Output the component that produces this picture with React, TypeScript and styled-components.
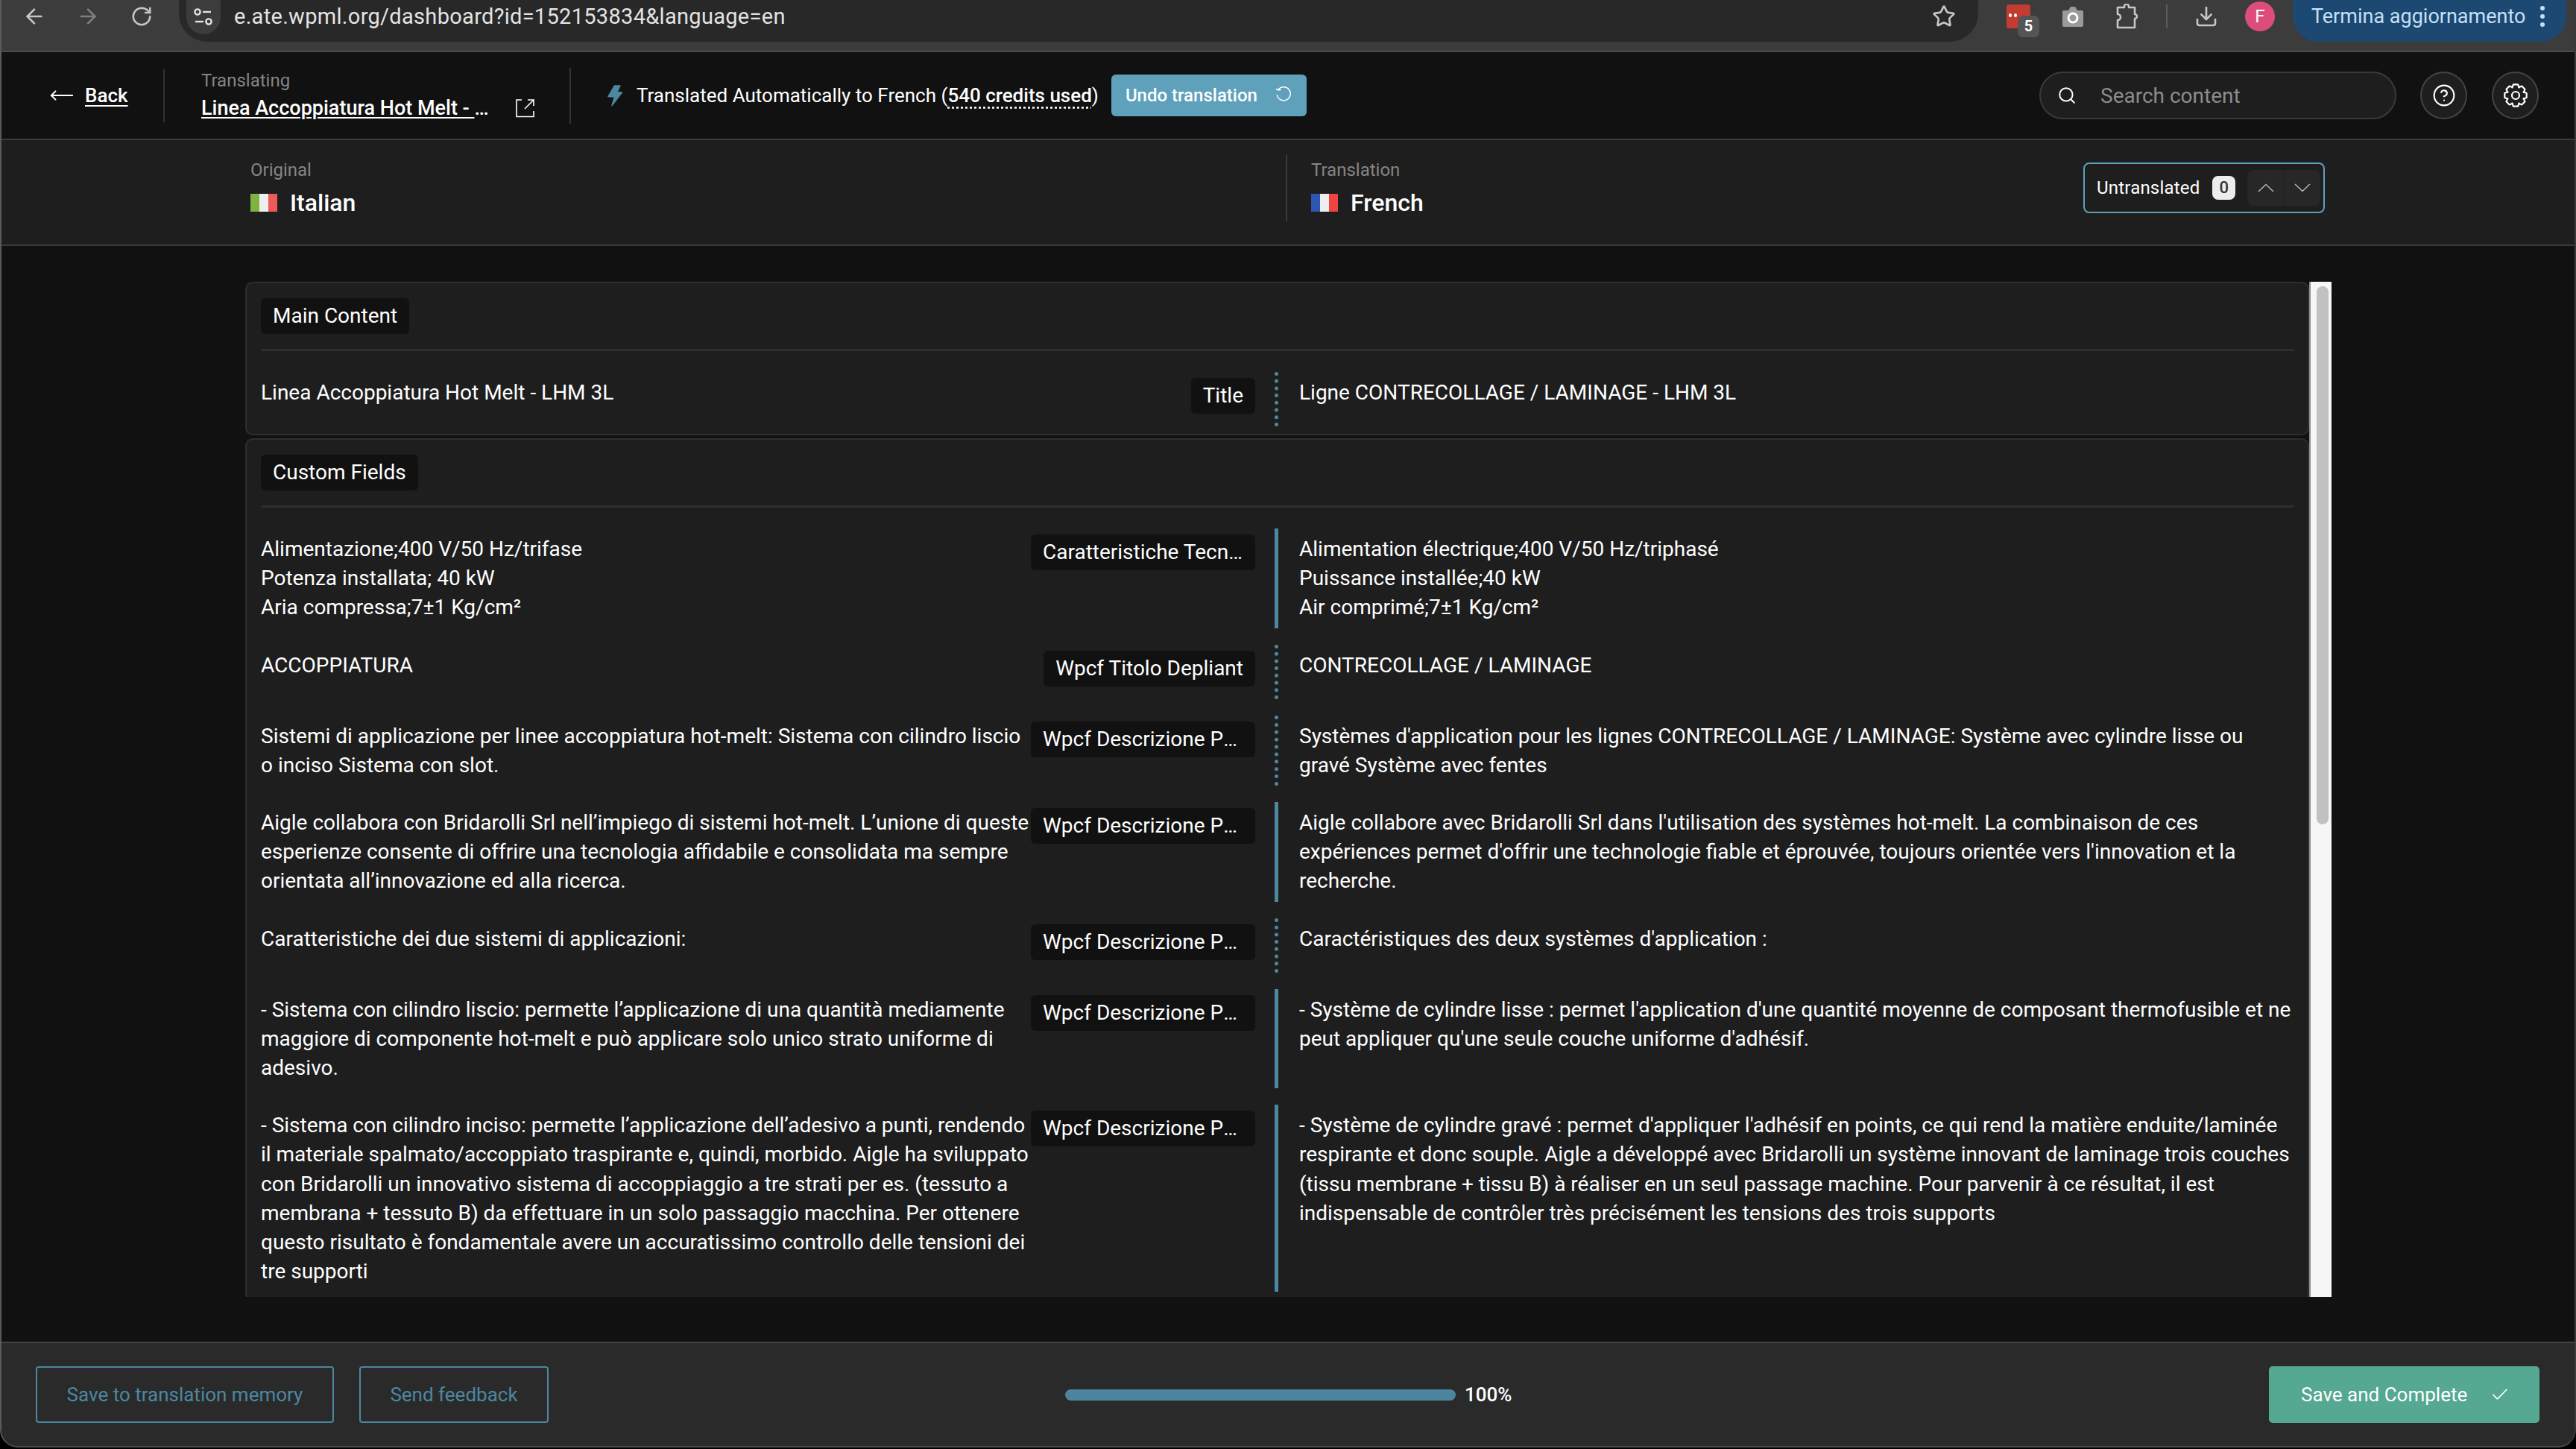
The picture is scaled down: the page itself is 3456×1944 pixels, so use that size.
import styled, { createGlobalStyle } from 'styled-components';
import {
	ArrowLeft,
	ArrowRight,
	Check,
	CircleHelp,
	Download,
	MoveLeft,
	RotateCw,
	Search,
	Star
} from 'lucide-react';

const GlobalStyle = createGlobalStyle`
	html, body {
		margin: 0;
		padding: 0;
		background: #000;
	}
	* {
		box-sizing: border-box;
	}
	body {
		font-family: Roboto, "Liberation Sans", sans-serif;
		font-size: 28px;
		color: #fff;
	}
`;

const Frame = styled.div`
	width: 3456px;
	height: 1942px;
	display: flex;
	flex-direction: column;
	overflow: hidden;
	border-left: 2px solid #5a5a5a;
	border-right: 2px solid #3a3a3a;
	border-bottom: 2px solid #4a4a4a;
	border-radius: 0 0 24px 24px;
	background: #111;
`;

/* browser chrome */
const Chrome = styled.div`
	height: 70px;
	flex: none;
	display: flex;
	align-items: flex-start;
	background: #3c3c3c;
	border-bottom: 2px solid #4a4a4a;
`;

const NavIcon = styled.span`
	width: 32px;
	height: 44px;
	display: flex;
	align-items: center;
	justify-content: center;
	color: #c6c6c6;
`;

const NavIcons = styled.div`
	display: flex;
	gap: 40px;
	padding-left: 28px;
	width: 238px;
	flex: none;
`;

const UrlPill = styled.div`
	width: 2414px;
	height: 56px;
	flex: none;
	display: flex;
	align-items: flex-start;
	padding-left: 10px;
	background: #282828;
	border-radius: 0 0 38px 38px;
`;

const TuneBadge = styled.span`
	width: 46px;
	height: 46px;
	display: flex;
	align-items: center;
	justify-content: center;
	flex: none;
	background: #3c3c3c;
	border-radius: 0 0 23px 23px;
`;

const UrlText = styled.span`
	margin-left: 18px;
	line-height: 44px;
	font-size: 29px;
	letter-spacing: 0.3px;
	color: #e3e3e3;
`;

const StarSlot = styled.span`
	margin-left: auto;
	margin-right: 30px;
	height: 44px;
	display: flex;
	align-items: center;
	color: #c6c6c6;
`;

const Extensions = styled.div`
	display: flex;
	align-items: flex-start;
	height: 56px;
	flex: 1;
`;

const RedExt = styled.span`
	position: relative;
	width: 32px;
	height: 32px;
	margin: 6px 0 0 38px;
	flex: none;
	background: #c43c31;
	border-radius: 3px;
	display: flex;
	gap: 3px;
	padding: 12px 0 0 3px;
`;

const RedDot = styled.i`
	width: 4px;
	height: 5px;
	border-radius: 50%;
	background: #fff;
`;

const CountBadge = styled.span`
	position: absolute;
	left: 15px;
	top: 15px;
	width: 29px;
	height: 29px;
	border-radius: 7px;
	background: #555;
	color: #fff;
	font-size: 20px;
	font-weight: 700;
	line-height: 29px;
	text-align: center;
`;

const ExtIcon = styled.span<{ $gap: number }>`
	width: 32px;
	height: 44px;
	flex: none;
	display: flex;
	align-items: center;
	justify-content: center;
	margin-left: ${(p) => p.$gap}px;
`;

const ChromeSeparator = styled.span`
	width: 2px;
	height: 32px;
	margin: 6px 0 0 36px;
	flex: none;
	background: #5c5c5c;
`;

const Avatar = styled.span`
	width: 40px;
	height: 40px;
	margin: 2px 0 0 36px;
	flex: none;
	border-radius: 50%;
	background: #dc4d7c;
	color: #fff;
	font-size: 24px;
	line-height: 40px;
	text-align: center;
`;

const UpdatePill = styled.div`
	width: 367px;
	height: 56px;
	margin-left: 24px;
	flex: none;
	display: flex;
	align-items: flex-start;
	padding-left: 25px;
	background: #1c4871;
	border-radius: 0 0 34px 34px;
	color: #c2e0f8;
	font-size: 27px;
	line-height: 44px;
`;

const KebabDots = styled.span`
	margin: 8px 0 0 20px;
	display: flex;
	flex-direction: column;
	gap: 5px;

	i {
		width: 6px;
		height: 6px;
		border-radius: 50%;
		background: #c2e0f8;
	}
`;

/* app header */
const Header = styled.header`
	height: 118px;
	flex: none;
	display: flex;
	align-items: center;
	padding-left: 64px;
	background: #111;
	border-bottom: 2px solid #3c3c3c;
`;

const BackLink = styled.a`
	display: flex;
	align-items: center;
	gap: 14px;
	width: 153px;
	flex: none;
	font-size: 26px;
	font-weight: 500;
	color: #fff;
	text-decoration: underline;
	text-underline-offset: 4px;
`;

const HeaderDivider = styled.span<{ $height: number }>`
	width: 2px;
	height: ${(p) => p.$height}px;
	flex: none;
	background: #333;
`;

const TranslatingBlock = styled.div`
	display: flex;
	flex-direction: column;
	gap: 4px;
	margin-left: 49px;
	width: 494px;
	flex: none;
`;

const MutedLabel = styled.span`
	font-size: 24px;
	line-height: 30px;
	color: #858585;
`;

const TitleLine = styled.div`
	display: flex;
	align-items: center;
	gap: 25px;
`;

const TitleLink = styled.a`
	width: 397px;
	overflow: hidden;
	white-space: nowrap;
	text-overflow: ellipsis;
	font-size: 27px;
	line-height: 36px;
	font-weight: 500;
	color: #fff;
	text-decoration: underline;
	text-underline-offset: 3px;
`;

const AutoStatus = styled.div`
	display: flex;
	align-items: center;
	margin-left: 49px;
	white-space: nowrap;
	font-size: 26px;
`;

const StatusText = styled.span`
	margin-left: 18px;
`;

const Credits = styled.span`
	font-weight: 500;
	text-decoration: underline dotted;
	text-underline-offset: 6px;
`;

const UndoButton = styled.button`
	height: 56px;
	width: 262px;
	margin-left: 17px;
	padding: 0 0 7px 19px;
	display: flex;
	align-items: center;
	gap: 24px;
	border: 0;
	border-radius: 6px;
	background: #5fa0bb;
	color: #fff;
	font-family: inherit;
	font-size: 24px;
	font-weight: 500;
`;

const UndoLabel = styled.span`
	margin-bottom: -7px;
`;

const SearchBox = styled.div`
	width: 479px;
	height: 64px;
	margin-left: auto;
	flex: none;
	display: flex;
	align-items: center;
	gap: 32px;
	padding-left: 22px;
	border: 2px solid #3a3a3a;
	border-radius: 32px;
	background: #1e1e1e;
	color: #8c8c8c;
	font-size: 28px;
`;

const RoundButton = styled.span<{ $gap: number }>`
	width: 63px;
	height: 64px;
	margin-left: ${(p) => p.$gap}px;
	flex: none;
	display: flex;
	align-items: center;
	justify-content: center;
	border: 2px solid #444;
	border-radius: 50%;
	background: #1e1e1e;
	color: #fff;
`;

const HeaderEnd = styled.span`
	width: 48px;
	flex: none;
`;

/* language row */
const LanguageBar = styled.div`
	height: 142px;
	flex: none;
	display: flex;
	align-items: center;
	padding-bottom: 12px;
	background: #1e1e1e;
	border-bottom: 2px solid #3a3a3a;
`;

const LanguageCell = styled.div<{ $width: number; $pad: number; $rule?: boolean }>`
	width: ${(p) => p.$width}px;
	height: 90px;
	flex: none;
	display: flex;
	flex-direction: column;
	justify-content: center;
	gap: 9px;
	padding-left: ${(p) => p.$pad}px;
	border-left: ${(p) => (p.$rule ? '2px solid #3a3a3a' : '0')};
`;

const LanguageName = styled.div`
	display: flex;
	align-items: center;
	gap: 17px;
	font-size: 32px;
	line-height: 40px;
	font-weight: 500;
`;

const Flag = styled.span<{ $a: string; $b: string; $c: string }>`
	width: 36px;
	height: 24px;
	flex: none;
	background: linear-gradient(
		90deg,
		${(p) => p.$a} 33.3%,
		${(p) => p.$b} 33.3% 66.6%,
		${(p) => p.$c} 66.6%
	);
`;

const FilterBox = styled.div`
	width: 324px;
	height: 68px;
	margin-left: auto;
	margin-right: 335px;
	flex: none;
	display: flex;
	align-items: center;
	padding-left: 16px;
	border: 2px solid #5fa0bb;
	border-radius: 8px;
	font-size: 24px;
	letter-spacing: 0.2px;
`;

const ZeroBadge = styled.span`
	width: 31px;
	height: 32px;
	margin-left: 17px;
	flex: none;
	border-radius: 8px;
	background: #ececec;
	color: #333;
	font-size: 22px;
	font-weight: 500;
	line-height: 32px;
	text-align: center;
`;

const FilterArrows = styled.div`
	width: 98px;
	height: 48px;
	margin-left: 16px;
	flex: none;
	display: grid;
	grid-template-columns: 1fr 1fr;
	border-radius: 8px;
	background: #272727;

	span {
		display: flex;
		align-items: center;
		justify-content: center;
	}
	span + span {
		border-left: 1px solid #1e1e1e;
	}
`;

/* content */
const Main = styled.main`
	flex: 1;
	min-height: 0;
	display: flex;
	padding: 48px 0 60px 327px;
	background: #111;
`;

const ScrollArea = styled.div`
	width: 2769px;
	flex: none;
	overflow: hidden;
	display: flex;
	flex-direction: column;
	gap: 4px;
`;

const Scrollbar = styled.div`
	width: 30px;
	flex: none;
	padding: 6px 6px 0 8px;
	background: #f6f6f6;
	border-left: 2px solid #8f8f8f;
`;

const ScrollThumb = styled.div`
	width: 16px;
	height: 722px;
	border-radius: 8px;
	background: #c1c1c1;
`;

const Section = styled.section`
	flex: none;
	padding: 20px 18px 10px 19px;
	background: #1e1e1e;
	border: 2px solid #2e2e2e;
	border-radius: 10px;
`;

const SectionHead = styled.div`
	padding-bottom: 20px;
	border-bottom: 3px solid #2e2e2e;
	margin-bottom: 28px;
`;

const Chip = styled.span`
	display: inline-block;
	height: 48px;
	max-width: 301px;
	padding: 0 16px;
	overflow: hidden;
	white-space: nowrap;
	text-overflow: ellipsis;
	line-height: 48px;
	font-size: 28px;
	background: #111;
	border-radius: 6px;
	vertical-align: top;
`;

const Rows = styled.div`
	display: flex;
	flex-direction: column;
	gap: 22px;
`;

const Row = styled.div`
	display: grid;
	grid-template-columns: 1033px 301px 34px 1fr;
	line-height: 39.2px;
	font-size: 28px;
`;

const Cell = styled.div`
	padding: 8px 0;
	white-space: pre-line;
`;

const LabelCell = styled.div`
	padding: 8px 0 17px;
	display: flex;
	justify-content: flex-end;
	align-items: flex-start;
`;

const StatusBar = styled.div<{ $done: boolean }>`
	margin-left: 26px;
	width: 5px;
	border-left: 5px ${(p) => (p.$done ? 'solid' : 'dotted')} #4d87a0;
`;

const TargetCell = styled(Cell)`
	padding-left: 25px;
`;

/* footer */
const Footer = styled.footer`
	height: 140px;
	flex: none;
	display: flex;
	align-items: center;
	padding: 0 47px 0 46px;
	background: #2a2a2a;
	border-top: 2px solid #444;
	font-size: 26px;
`;

const OutlineButton = styled.button<{ $width: number; $gap: number }>`
	width: ${(p) => p.$width}px;
	height: 76px;
	margin-left: ${(p) => p.$gap}px;
	flex: none;
	border: 2px solid #4d87a0;
	border-radius: 4px;
	background: transparent;
	color: #4d87a0;
	font-family: inherit;
	font-size: 26px;
`;

const ProgressWrap = styled.div`
	margin-left: 693px;
	display: flex;
	align-items: center;
	gap: 12px;
	flex: none;
`;

const ProgressBar = styled.div`
	width: 524px;
	height: 15px;
	border-radius: 8px;
	background: #4d859e;
`;

const ProgressValue = styled.span`
	font-weight: 500;
`;

const SaveButton = styled.button`
	width: 363px;
	height: 76px;
	margin-left: auto;
	flex: none;
	display: flex;
	align-items: center;
	gap: 30px;
	padding-left: 43px;
	border: 0;
	border-radius: 5px;
	background: #55a892;
	color: #fff;
	font-family: inherit;
	font-size: 26px;
`;

type RowData = {
	source: string;
	label: string;
	target: string;
	done?: boolean;
};

const customFields: RowData[] = [
	{
		source: 'Alimentazione;400 V/50 Hz/trifase\nPotenza installata; 40 kW\nAria compressa;7±1 Kg/cm²',
		label: 'Caratteristiche Tecniche',
		target: 'Alimentation électrique;400 V/50 Hz/triphasé\nPuissance installée;40 kW\nAir comprimé;7±1 Kg/cm²',
		done: true
	},
	{ source: 'ACCOPPIATURA', label: 'Wpcf Titolo Depliant', target: 'CONTRECOLLAGE / LAMINAGE' },
	{
		source: 'Sistemi di applicazione per linee accoppiatura hot-melt: Sistema con cilindro liscio o inciso Sistema con slot.',
		label: 'Wpcf Descrizione Prodotto',
		target: "Systèmes d'application pour les lignes CONTRECOLLAGE / LAMINAGE: Système avec cylindre lisse ou gravé Système avec fentes"
	},
	{
		source: 'Aigle collabora con Bridarolli Srl nell’impiego di sistemi hot-melt. L’unione di queste esperienze consente di offrire una tecnologia affidabile e consolidata ma sempre orientata all’innovazione ed alla ricerca.',
		label: 'Wpcf Descrizione Prodotto',
		target: "Aigle collabore avec Bridarolli Srl dans l'utilisation des systèmes hot-melt. La combinaison de ces expériences permet d'offrir une technologie fiable et éprouvée, toujours orientée vers l'innovation et la recherche.",
		done: true
	},
	{
		source: 'Caratteristiche dei due sistemi di applicazioni:',
		label: 'Wpcf Descrizione Prodotto',
		target: "Caractéristiques des deux systèmes d'application :"
	},
	{
		source: '- Sistema con cilindro liscio: permette l’applicazione di una quantità mediamente maggiore di componente hot-melt e può applicare solo unico strato uniforme di adesivo.',
		label: 'Wpcf Descrizione Prodotto',
		target: "- Système de cylindre lisse : permet l'application d'une quantité moyenne de composant thermofusible et ne peut appliquer qu'une seule couche uniforme d'adhésif.",
		done: true
	},
	{
		source: '- Sistema con cilindro inciso: permette l’applicazione dell’adesivo a punti, rendendo il materiale spalmato/accoppiato traspirante e, quindi, morbido. Aigle ha sviluppato con Bridarolli un innovativo sistema di accoppiaggio a tre strati per es. (tessuto a membrana + tessuto B) da effettuare in un solo passaggio macchina. Per ottenere questo risultato è fondamentale avere un accuratissimo controllo delle tensioni dei tre supporti',
		label: 'Wpcf Descrizione Prodotto',
		target: "- Système de cylindre gravé : permet d'appliquer l'adhésif en points, ce qui rend la matière enduite/laminée respirante et donc souple. Aigle a développé avec Bridarolli un système innovant de laminage trois couches (tissu membrane + tissu B) à réaliser en un seul passage machine. Pour parvenir à ce résultat, il est indispensable de contrôler très précisément les tensions des trois supports",
		done: true
	}
];

const ContentRow = ({ source, label, target, done }: RowData) => (
	<Row>
		<Cell>{source}</Cell>
		<LabelCell>
			<Chip>{label}</Chip>
		</LabelCell>
		<StatusBar $done={!!done} />
		<TargetCell>{target}</TargetCell>
	</Row>
);

const TuneIcon = () => (
	<svg width="26" height="24" viewBox="0 0 26 24" fill="none" stroke="#e3e3e3" strokeWidth="2.4">
		<circle cx="5" cy="5" r="3.6" />
		<path d="M12 5h11" />
		<path d="M2 18h11" />
		<circle cx="20" cy="18" r="3.6" />
	</svg>
);

const CameraIcon = () => (
	<svg width="30" height="28" viewBox="0 0 30 28">
		<path d="M1 8q0-2 2-2h6l3-5h6l3 5h6q2 0 2 2v18q0 2-2 2H3q-2 0-2-2z" fill="#9a9a9a" />
		<circle cx="15" cy="16" r="6" fill="none" stroke="#fff" strokeWidth="3" />
	</svg>
);

const PuzzleIcon = () => (
	<svg width="32" height="34" viewBox="0 0 32 34" fill="none" stroke="#c6c6c6" strokeWidth="2.6">
		<path d="M12 5V3.5a3 3 0 0 1 6 0V5h8v9a3 3 0 0 1 0 6v12H3V22a4 4 0 0 0 0-8V5z" strokeLinejoin="round" />
	</svg>
);

const BoltIcon = () => (
	<svg width="21" height="29" viewBox="0 0 21 29" style={{ overflow: 'visible' }}>
		<path
			d="M9.5 1h7.5l-4 8.5 6.5.5L6 27.5l3.5-11.5-8.500-.5z"
			fill="#4d87a0"
			stroke="#4d87a0"
			strokeWidth="1.5"
			strokeLinejoin="round"
		/>
	</svg>
);

const LinkOutIcon = () => (
	<svg width="25" height="25" viewBox="0 0 25 25" fill="none" stroke="#fff" strokeWidth="1.6">
		<path d="M8 1H1v22.500h23V16" />
		<path d="M24 1 12 13" />
		<path d="M16 1h8v8" />
	</svg>
);

const UndoIcon = () => (
	<svg width="22" height="22" viewBox="0 0 22 22" fill="none" stroke="#fff" strokeWidth="1.5">
		<path d="M4 6.500A9 9 0 1 1 2.300 13" />
		<path d="M1.500 5.500 4 7l3-.500" strokeLinecap="round" />
	</svg>
);

const WideChevron = ({ up }: { up?: boolean }) => (
	<svg width="22" height="12" viewBox="0 0 22 12" fill="none" stroke="#b4b4b4" strokeWidth="1.5">
		<path d={up ? 'M1 11 11 1.500 21 11' : 'M1 1l10 9.500L21 1'} />
	</svg>
);

// eight tooth cog outline
const gearPoints = Array.from({ length: 8 }, (_, i) => {
	const mid = (i * Math.PI) / 4;
	return [
		[11.6, mid - 0.42],
		[15, mid - 0.2],
		[15, mid + 0.2],
		[11.6, mid + 0.42]
	]
		.map(([r, a]) => `${(16 + r * Math.cos(a)).toFixed(2)},${(16 + r * Math.sin(a)).toFixed(2)}`)
		.join(' ');
}).join(' ');

const GearIcon = () => (
	<svg width="32" height="32" viewBox="0 0 32 32" fill="none" stroke="#fff" strokeWidth="2.2" strokeLinejoin="round">
		<polygon points={gearPoints} />
		<circle cx="16" cy="16" r="5" />
	</svg>
);

const App = () => (
	<>
		<GlobalStyle />
		<Frame>
			<Chrome>
				<NavIcons>
					<NavIcon>
						<ArrowLeft size={32} strokeWidth={2} />
					</NavIcon>
					<NavIcon>
						<ArrowRight size={32} strokeWidth={2} color="#7f7f7f" />
					</NavIcon>
					<NavIcon>
						<RotateCw size={30} strokeWidth={2} />
					</NavIcon>
				</NavIcons>
				<UrlPill>
					<TuneBadge>
						<TuneIcon />
					</TuneBadge>
					<UrlText>e.ate.wpml.org/dashboard?id=152153834&amp;language=en</UrlText>
					<StarSlot>
						<Star size={32} strokeWidth={2} />
					</StarSlot>
				</UrlPill>
				<Extensions>
					<RedExt>
						<RedDot />
						<RedDot />
						<CountBadge>5</CountBadge>
					</RedExt>
					<ExtIcon $gap={41}>
						<CameraIcon />
					</ExtIcon>
					<ExtIcon $gap={41}>
						<PuzzleIcon />
					</ExtIcon>
					<ChromeSeparator />
					<ExtIcon $gap={36}>
						<Download size={34} strokeWidth={2} color="#c6c6c6" />
					</ExtIcon>
					<Avatar>F</Avatar>
					<UpdatePill>
						Termina aggiornamento
						<KebabDots>
							<i />
							<i />
							<i />
						</KebabDots>
					</UpdatePill>
				</Extensions>
			</Chrome>

			<Header>
				<BackLink>
					<MoveLeft size={34} strokeWidth={1.4} />
					Back
				</BackLink>
				<HeaderDivider $height={71} />
				<TranslatingBlock>
					<MutedLabel>Translating</MutedLabel>
					<TitleLine>
						<TitleLink>Linea Accoppiatura Hot Melt - LHM 3L</TitleLink>
						<LinkOutIcon />
					</TitleLine>
				</TranslatingBlock>
				<HeaderDivider $height={75} />
				<AutoStatus>
					<BoltIcon />
					<StatusText>
						Translated Automatically to French (<Credits>540 credits used</Credits>)
					</StatusText>
					<UndoButton>
						<UndoLabel>Undo translation</UndoLabel>
						<UndoIcon />
					</UndoButton>
				</AutoStatus>
				<SearchBox>
					<Search size={26} strokeWidth={1.8} color="#fff" />
					Search content
				</SearchBox>
				<RoundButton $gap={32}>
					<CircleHelp size={32} strokeWidth={1.6} />
				</RoundButton>
				<RoundButton $gap={33}>
					<GearIcon />
				</RoundButton>
				<HeaderEnd />
			</Header>

			<LanguageBar>
				<LanguageCell $width={1723} $pad={334}>
					<MutedLabel>Original</MutedLabel>
					<LanguageName>
						<Flag $a="#7fb23f" $b="#eeeeee" $c="#ee5a5a" />
						Italian
					</LanguageName>
				</LanguageCell>
				<LanguageCell $width={600} $pad={32} $rule>
					<MutedLabel>Translation</MutedLabel>
					<LanguageName>
						<Flag $a="#2d57b5" $b="#eeeeee" $c="#ee4444" />
						French
					</LanguageName>
				</LanguageCell>
				<FilterBox>
					Untranslated
					<ZeroBadge>0</ZeroBadge>
					<FilterArrows>
						<span>
							<WideChevron up />
						</span>
						<span>
							<WideChevron />
						</span>
					</FilterArrows>
				</FilterBox>
			</LanguageBar>

			<Main>
				<ScrollArea>
					<Section>
						<SectionHead>
							<Chip>Main Content</Chip>
						</SectionHead>
						<Rows>
							<ContentRow
								source="Linea Accoppiatura Hot Melt - LHM 3L"
								label="Title"
								target="Ligne CONTRECOLLAGE / LAMINAGE - LHM 3L"
							/>
						</Rows>
					</Section>
					<Section>
						<SectionHead>
							<Chip>Custom Fields</Chip>
						</SectionHead>
						<Rows>
							{customFields.map((row, index) => (
								<ContentRow key={index} {...row} />
							))}
						</Rows>
					</Section>
				</ScrollArea>
				<Scrollbar>
					<ScrollThumb />
				</Scrollbar>
			</Main>

			<Footer>
				<OutlineButton $width={400} $gap={0}>
					Save to translation memory
				</OutlineButton>
				<OutlineButton $width={254} $gap={34}>
					Send feedback
				</OutlineButton>
				<ProgressWrap>
					<ProgressBar />
					<ProgressValue>100%</ProgressValue>
				</ProgressWrap>
				<SaveButton>
					Save and Complete
					<Check size={28} strokeWidth={1.4} />
				</SaveButton>
			</Footer>
		</Frame>
	</>
);

export default App;
